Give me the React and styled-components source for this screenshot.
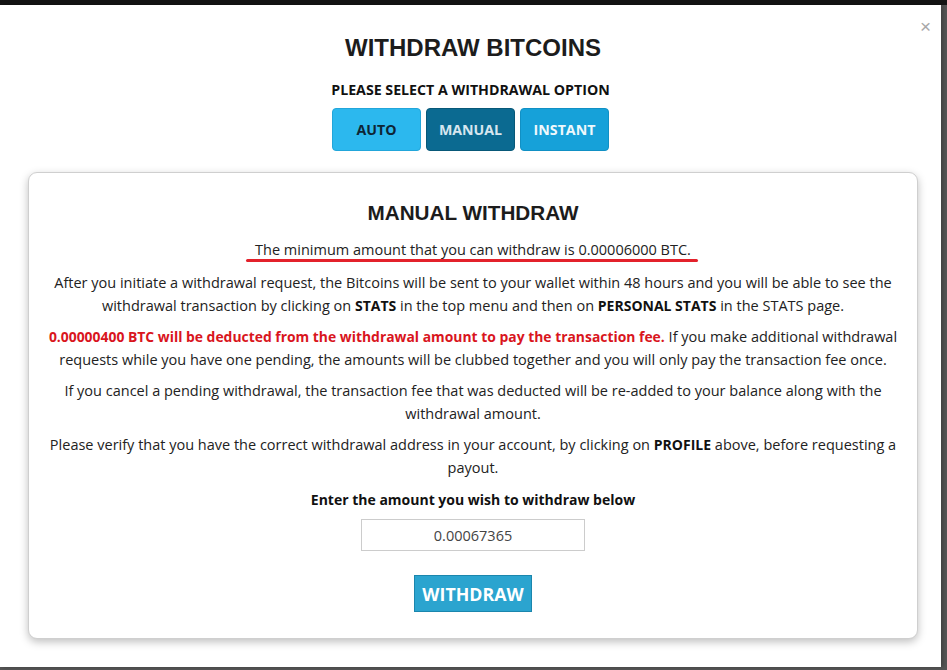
import React from "react";
import styled, { createGlobalStyle } from "styled-components";

const Global = createGlobalStyle`
  html, body { margin: 0; padding: 0; }
  body {
    background: #4e4e4e;
    font-family: "Open Sans", "Liberation Sans", Arial, sans-serif;
    overflow: hidden;
  }
`;

const Page = styled.div`
  width: 947px;
  height: 670px;
  background: linear-gradient(#141414 0, #141414 5px, #555 5px);
  display: flex;
  align-items: flex-start;
`;

const Modal = styled.div`
  position: relative;
  margin-top: 5px;
  width: 941px;
  height: 662px;
  box-sizing: border-box;
  background: #fff;
  box-shadow: 2px 0 4px rgba(0, 0, 0, 0.25);
  padding: 29px 23px 0 28px;
  display: flex;
  flex-direction: column;
  align-items: center;
`;

const Close = styled.button`
  position: absolute;
  top: 12px;
  right: 10px;
  border: 0;
  background: none;
  padding: 0;
  font-family: "Liberation Sans", Arial, sans-serif;
  font-size: 19px;
  line-height: 20px;
  color: #a8a8a8;
  cursor: pointer;
`;

const Title = styled.h1`
  margin: 0;
  font-family: "Liberation Sans", Arial, sans-serif;
  font-weight: bold;
  font-size: 24px;
  line-height: 28px;
  color: #1c1c1c;
  text-align: center;
`;

const Subtitle = styled.h4`
  margin: 18px 5px 0 0;
  font-size: 14.2px;
  font-weight: 700;
  line-height: 20px;
  color: #111;
  text-align: center;
`;

const Options = styled.div`
  display: flex;
  gap: 5px;
  margin: 8px 5px 0 0;
`;

const variants = {
  auto: { bg: "#2cb8ee", border: "#22a6da", color: "#0e2535" },
  manual: { bg: "#0b6a91", border: "#085878", color: "#d6e6ef" },
  instant: { bg: "#16a1d9", border: "#1190c4", color: "#eef8fc" },
};

const OptionButton = styled.button`
  width: 89px;
  height: 43px;
  border-radius: 4px;
  border: 1px solid ${(p) => variants[p.$variant].border};
  background: ${(p) => variants[p.$variant].bg};
  color: ${(p) => variants[p.$variant].color};
  font-family: "Open Sans", sans-serif;
  font-weight: 700;
  font-size: 14.2px;
  cursor: pointer;
`;

const Card = styled.section`
  align-self: stretch;
  margin-top: 21px;
  border: 1px solid #cfcfcf;
  border-radius: 9px;
  box-shadow: 0 3px 8px rgba(0, 0, 0, 0.25);
  background: #fff;
  padding: 28px 14px 26px;
  display: flex;
  flex-direction: column;
  align-items: center;
  text-align: center;
  color: #222;
`;

const CardTitle = styled.h2`
  margin: 0;
  font-family: "Liberation Sans", Arial, sans-serif;
  font-weight: bold;
  font-size: 20.7px;
  line-height: 24px;
  color: #1c1c1c;
`;

const Minimum = styled.p`
  position: relative;
  margin: 13px 0 0;
  font-size: 14.5px;
  line-height: 23.5px;
  color: #222;
  &::after {
    content: "";
    position: absolute;
    left: -9px;
    right: -7px;
    bottom: 0px;
    height: 3px;
    border-radius: 2px;
    background: #e3212b;
  }
`;

const Paragraph = styled.p`
  margin: ${(p) => p.$top || 7}px 0 0;
  font-size: 14.5px;
  line-height: 23.5px;
  color: #222;
`;

const Strong = styled.strong`
  font-weight: 700;
  font-size: 14px;
  color: #111;
`;

const Warning = styled.strong`
  font-weight: 700;
  font-size: 13.9px;
  color: #d9151d;
`;

const Prompt = styled.label`
  margin-top: 8px;
  font-size: 14px;
  line-height: 23.5px;
  font-weight: 700;
  color: #111;
`;

const AmountInput = styled.input`
  margin-top: 8px;
  width: 224px;
  height: 32px;
  box-sizing: border-box;
  border: 1px solid #cccccc;
  text-align: center;
  font-family: "Open Sans", sans-serif;
  font-size: 14.5px;
  color: #444;
  outline: none;
`;

const WithdrawButton = styled.button`
  margin-top: 24px;
  width: 118px;
  height: 37px;
  border: 1px solid #1b86ad;
  background: #2ba4cf;
  color: #fff;
  font-family: "Open Sans", sans-serif;
  font-weight: 700;
  font-size: 17.8px;
  cursor: pointer;
  padding: 0;
`;

export default function App() {
  return (
    <>
      <Global />
      <Page>
        <Modal>
          <Close aria-label="close">×</Close>
          <Title>WITHDRAW BITCOINS</Title>
          <Subtitle>PLEASE SELECT A WITHDRAWAL OPTION</Subtitle>
          <Options>
            <OptionButton $variant="auto">AUTO</OptionButton>
            <OptionButton $variant="manual">MANUAL</OptionButton>
            <OptionButton $variant="instant">INSTANT</OptionButton>
          </Options>
          <Card>
            <CardTitle>MANUAL WITHDRAW</CardTitle>
            <Minimum>The minimum amount that you can withdraw is 0.00006000 BTC.</Minimum>
            <Paragraph $top={9}>
              After you initiate a withdrawal request, the Bitcoins will be sent to your wallet within 48 hours and you
              will be able to see the withdrawal transaction by clicking on <Strong>STATS</Strong> in the top menu and
              then on <Strong>PERSONAL STATS</Strong> in the STATS page.
            </Paragraph>
            <Paragraph>
              <Warning>0.00000400 BTC will be deducted from the withdrawal amount to pay the transaction fee.</Warning>{" "}
              If you make additional withdrawal requests while you have one pending, the amounts will be clubbed
              together and you will only pay the transaction fee once.
            </Paragraph>
            <Paragraph>
              If you cancel a pending withdrawal, the transaction fee that was deducted will be re-added to your balance
              along with the withdrawal amount.
            </Paragraph>
            <Paragraph>
              Please verify that you have the correct withdrawal address in your account, by clicking on{" "}
              <Strong>PROFILE</Strong> above, before requesting a payout.
            </Paragraph>
            <Prompt htmlFor="amount">Enter the amount you wish to withdraw below</Prompt>
            <AmountInput id="amount" defaultValue="0.00067365" />
            <WithdrawButton>WITHDRAW</WithdrawButton>
          </Card>
        </Modal>
      </Page>
    </>
  );
}
